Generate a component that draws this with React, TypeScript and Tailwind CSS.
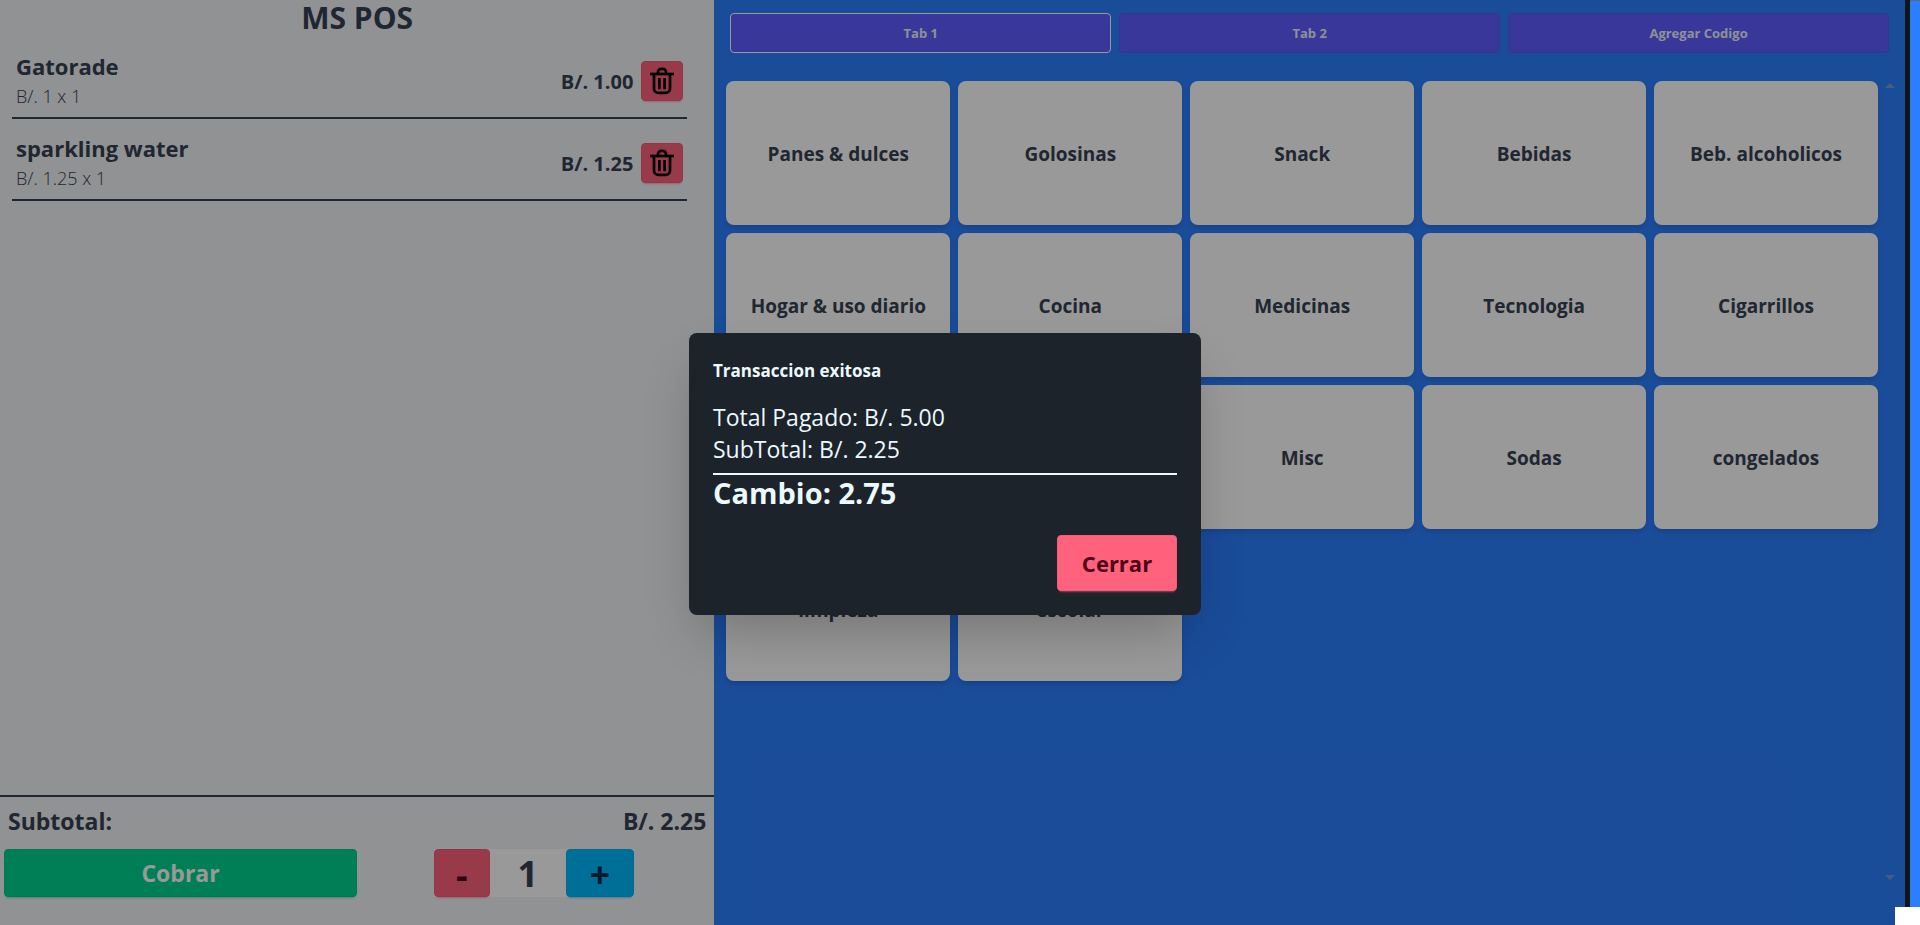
import { useState } from "react";

type Item = { name: string; price: number; label: string; qty: number };

const items: Item[] = [
  { name: "Gatorade", price: 1, label: "1", qty: 1 },
  { name: "sparkling water", price: 1.25, label: "1.25", qty: 1 },
];

const tabs = ["Tab 1", "Tab 2", "Agregar Codigo"];

const categories = [
  "Panes & dulces",
  "Golosinas",
  "Snack",
  "Bebidas",
  "Beb. alcoholicos",
  "Hogar & uso diario",
  "Cocina",
  "Medicinas",
  "Tecnologia",
  "Cigarrillos",
  "",
  "",
  "Misc",
  "Sodas",
  "congelados",
  "limpieza",
  "escolar",
];

function TrashIcon() {
  return (
    <svg
      viewBox="0 0 28 28"
      className="size-7"
      fill="none"
      stroke="#000"
      strokeWidth="2.7"
      strokeLinejoin="round"
      aria-hidden="true"
    >
      <path d="M2 7h24" />
      <path d="M6 7v14.5a4.4 4.4 0 0 0 4.4 4.4h7.2a4.4 4.4 0 0 0 4.4-4.4V7" />
      <path d="M10 7V5.2a3.4 3.4 0 0 1 3.4-3.4h1.2A3.4 3.4 0 0 1 18 5.2V7" />
      <path d="M11.4 11v11.2M16.6 11v11.2" />
    </svg>
  );
}

function CartRow({ item }: { item: Item }) {
  return (
    <li className="mt-2 flex items-center justify-between border-b-2 border-gray-700 px-1 py-1">
      <div className="pt-px pb-[3px]">
        <h2 className="text-[22px] leading-8 font-bold">{item.name}</h2>
        <p className="text-lg leading-7 font-light">
          B/. {item.label} x {item.qty}
        </p>
      </div>
      <div className="flex items-center gap-2">
        <span className="pt-0.5 text-xl font-bold">B/. {item.price.toFixed(2)}</span>
        <button
          type="button"
          aria-label={`Eliminar ${item.name}`}
          className="flex h-10 w-[42px] items-center justify-center rounded border border-[#f25d77] bg-[#ff627d] shadow-[0_3px_2px_-2px_#ff627d80]"
        >
          <TrashIcon />
        </button>
      </div>
    </li>
  );
}

export default function App() {
  const [tab, setTab] = useState(0);
  const [open, setOpen] = useState(true);
  const [qty, setQty] = useState(1);

  return (
    <div className="relative flex h-screen bg-[#2b7fff] font-['Open_Sans',sans-serif] text-gray-700">
      <div className="relative mr-2.5 flex min-w-0 flex-1 bg-[#1d232a] pr-[5px]">
        <aside className="flex w-[37.5%] flex-col bg-[#f1f3f6]">
          <h1 className="pb-px text-center text-3xl leading-9 font-bold">MS POS</h1>
          <ul className="min-h-0 flex-1 pr-[27px] pl-3">
            {items.map((item) => (
              <CartRow key={item.name} item={item} />
            ))}
          </ul>
          <footer className="border-t-2 border-gray-700 pb-7">
            <div className="flex justify-between px-2 pt-2 pb-3 text-[23px] leading-8 font-bold">
              <span>Subtotal:</span>
              <span>B/. 2.25</span>
            </div>
            <div className="flex">
              <div className="w-1/2 pl-1">
                <button
                  type="button"
                  className="h-12 w-full rounded border border-[#00c889] bg-[#00d390] text-[23px] font-bold text-white shadow-[0_3px_2px_-2px_#00d39080]"
                >
                  Cobrar
                </button>
              </div>
              <div className="flex w-1/2 justify-center pr-1">
                <div className="flex bg-white text-4xl font-bold">
                  <button
                    type="button"
                    aria-label="-"
                    onClick={() => setQty(Math.max(1, qty - 1))}
                    className="h-12 w-14 rounded border border-[#f25d77] bg-[#ff627d] pt-1 leading-10 text-[#4d0218] shadow-[0_3px_2px_-2px_#ff627d80]"
                  >
                    -
                  </button>
                  <output className="w-19 pt-0.5 text-center leading-[46px]">{qty}</output>
                  <button
                    type="button"
                    aria-label="+"
                    onClick={() => setQty(qty + 1)}
                    className="h-12 w-17 rounded border border-[#00b1f1] bg-[#00bafe] pt-1 leading-10 text-[#042e49] shadow-[0_3px_2px_-2px_#00bafe80]"
                  >
                    +
                  </button>
                </div>
              </div>
            </div>
          </footer>
        </aside>

        <main className="flex min-w-0 flex-1 flex-col bg-[#2b7fff]">
          <nav className="flex gap-2 px-4 pt-[13px]">
            {tabs.map((name, i) => (
              <button
                key={name}
                type="button"
                onClick={() => setTab(i)}
                className={
                  "h-10 flex-1 rounded border bg-[#605dff] pt-0.5 text-[13px] font-bold text-[#edf1fe] " +
                  (i === tab ? "border-white" : "border-[#5b58f2]")
                }
              >
                {name}
              </button>
            ))}
          </nav>
          <div className="mt-7 mb-9 flex min-h-0 flex-1 justify-between pr-2.5 pl-3">
            <div className="grid flex-1 auto-rows-[144px] grid-cols-5 gap-2">
              {categories.map((name, i) => (
                <button
                  key={i}
                  type="button"
                  className="rounded-lg bg-white pt-0.5 text-[19px] font-bold shadow-md"
                >
                  {name}
                </button>
              ))}
            </div>
            <svg className="ml-[7px] h-full w-2.5 text-[#769bd4]" aria-hidden="true">
              <svg viewBox="0 0 10 5" width="10" height="5" y="2">
                <path d="M0 5 5 0l5 5z" fill="currentColor" />
              </svg>
              <svg y="100%" overflow="visible">
                <path d="M0-14h10l-5 5z" fill="currentColor" />
              </svg>
            </svg>
          </div>
        </main>

        <div className="absolute inset-0 bg-black/40" />
      </div>

      {open && (
        <div className="absolute inset-0 flex items-center justify-center pt-[23px] pr-[30px]">
          <section
            role="dialog"
            aria-labelledby="dialog-title"
            className="w-lg rounded-lg bg-[#1d232a] p-6 text-[#ecf9ff] shadow-[0_25px_50px_-12px_rgba(0,0,0,0.25)]"
          >
            <h3 id="dialog-title" className="text-[17px] leading-7 font-bold">
              Transaccion exitosa
            </h3>
            <div className="mt-4 border-b-2 border-[#ecf9ff] pb-2 text-[23px] leading-8">
              <p>Total Pagado: B/. 5.00</p>
              <p>SubTotal: B/. 2.25</p>
            </div>
            <p className="text-[29px] leading-9 font-bold">Cambio: 2.75</p>
            <div className="mt-6 flex justify-end">
              <button
                type="button"
                onClick={() => setOpen(false)}
                className="h-14 w-30 rounded border border-[#f25d77] bg-[#ff627d] text-[22px] font-bold text-[#4d0218] shadow-[0_3px_2px_-2px_#ff627d80]"
              >
                Cerrar
              </button>
            </div>
          </section>
        </div>
      )}

      <div className="absolute top-0 right-0 h-px w-2.5 bg-[#666666]" />
      <div className="absolute right-0 bottom-0 h-[18px] w-[25px] bg-white" />
    </div>
  );
}
